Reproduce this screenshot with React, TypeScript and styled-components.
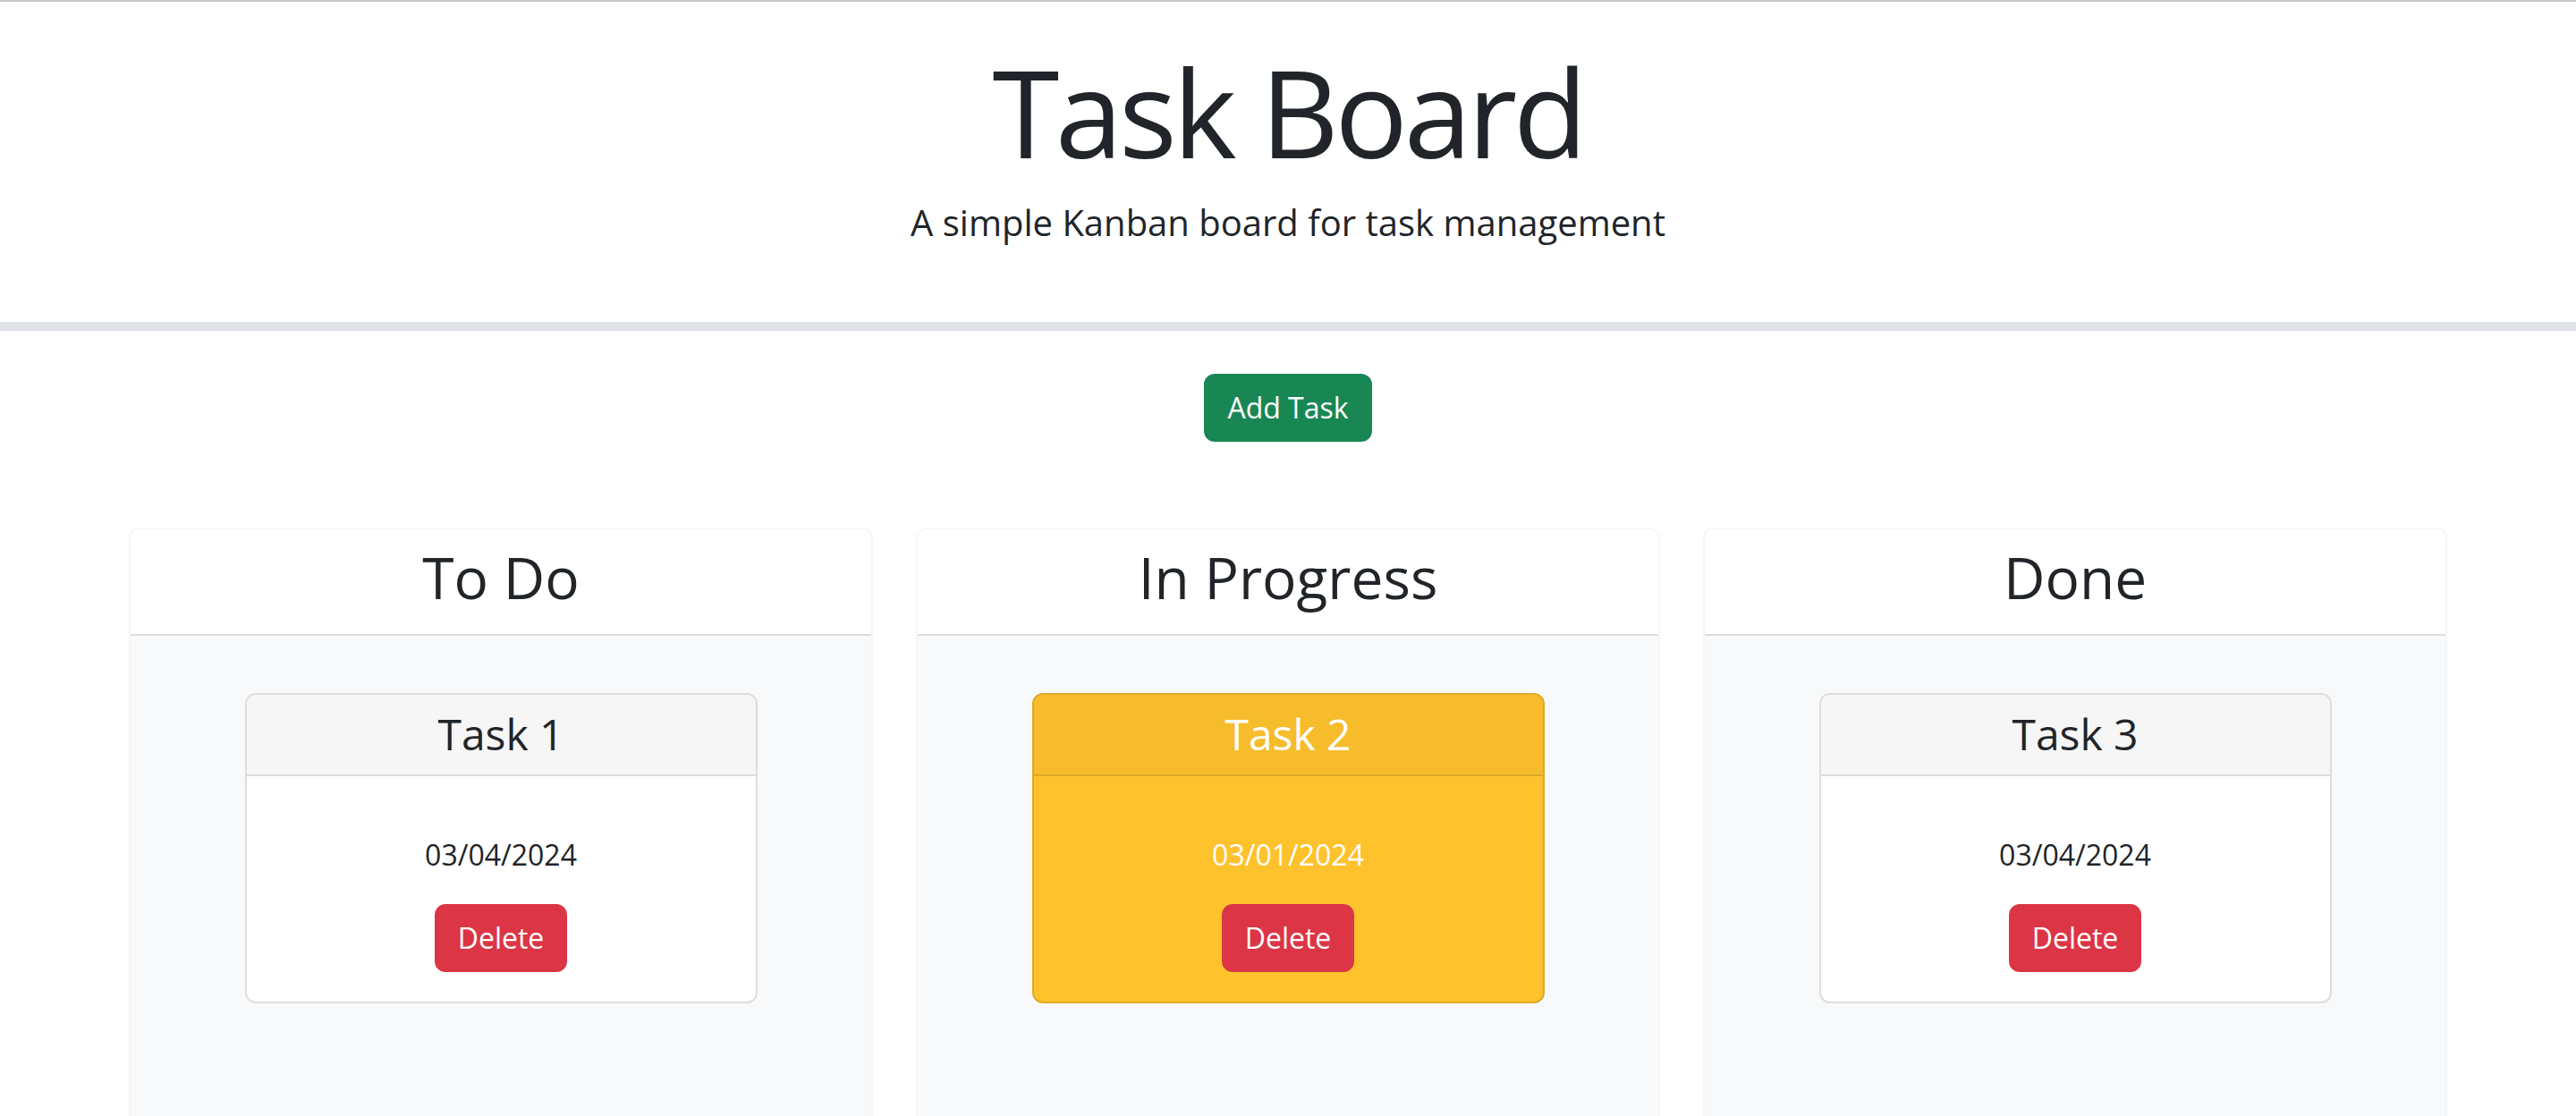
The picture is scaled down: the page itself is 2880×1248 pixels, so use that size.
import React from "react";
import styled, { createGlobalStyle } from "styled-components";

type Task = {
  id: number;
  title: string;
  date: string;
  warning?: boolean;
};

type Lane = {
  id: string;
  title: string;
  tasks: Task[];
};

const lanes: Lane[] = [
  { id: "to-do", title: "To Do", tasks: [{ id: 1, title: "Task 1", date: "03/04/2024" }] },
  {
    id: "in-progress",
    title: "In Progress",
    tasks: [{ id: 2, title: "Task 2", date: "03/01/2024", warning: true }],
  },
  { id: "done", title: "Done", tasks: [{ id: 3, title: "Task 3", date: "03/04/2024" }] },
];

const GlobalStyle = createGlobalStyle`
  * {
    box-sizing: border-box;
  }
  body {
    margin: 0;
    background: #fff;
    color: #212529;
    font-family: "Open Sans", "Noto Sans", sans-serif;
  }
`;

const Header = styled.header`
  border-top: 2px solid #c8c8c8;
  border-bottom: 10px solid #dee2e6;
  padding: 41px 0 49px;
  text-align: center;
`;

const Title = styled.h1`
  margin: 0 0 13px;
  font-size: 136px;
  font-weight: 400;
  letter-spacing: -4.5px;
  line-height: 1.2;
`;

const Lead = styled.p`
  margin: 0 0 32px;
  font-size: 40px;
  font-weight: 400;
  line-height: 1.5;
`;

const Toolbar = styled.div`
  display: flex;
  justify-content: center;
  margin-top: 48px;
`;

const Button = styled.button<{ $variant: "success" | "danger" }>`
  font-family: inherit;
  font-size: 32px;
  line-height: 1.5;
  padding: 12px 24px;
  color: #fff;
  border-radius: 12px;
  border: 2px solid ${({ $variant }) => ($variant === "success" ? "#198754" : "#dc3545")};
  background: ${({ $variant }) => ($variant === "success" ? "#198754" : "#dc3545")};
  cursor: pointer;
`;

const Board = styled.main`
  width: 2640px;
  margin: 96px auto 0;
  padding: 0 24px;
  display: grid;
  grid-template-columns: repeat(3, 1fr);
  gap: 48px;
`;

const LaneCard = styled.section`
  display: flex;
  flex-direction: column;
  border: 2px solid #f5f6f7;
  border-radius: 12px;
  overflow: hidden;
`;

const LaneHeader = styled.div`
  background: #fff;
  padding: 16px 32px;
  border-bottom: 2px solid #dcdcdc;
  text-align: center;
`;

const LaneTitle = styled.h2`
  margin: 0 0 8px;
  font-size: 64px;
  font-weight: 400;
  line-height: 1.2;
`;

const LaneBody = styled.div`
  background: #f8f9fa;
  padding: 64px 32px 32px;
  min-height: 700px;
`;

const TaskCard = styled.div<{ $warning?: boolean }>`
  width: 75%;
  margin: 0 auto;
  border-radius: 12px;
  border: 2px solid ${({ $warning }) => ($warning ? "#ddaa28" : "#dddddd")};
  background: ${({ $warning }) => ($warning ? "#fec22c" : "#fff")};
  color: ${({ $warning }) => ($warning ? "#fff" : "#212529")};
  overflow: hidden;
  text-align: center;
`;

const TaskHeader = styled.div<{ $warning?: boolean }>`
  background: ${({ $warning }) => ($warning ? "#f6bc2b" : "#f6f6f6")};
  border-bottom: 2px solid ${({ $warning }) => ($warning ? "#ddaa28" : "#dddddd")};
  padding: 15px 32px 17px;
  font-size: 48px;
  font-weight: 400;
  line-height: 1.2;
  height: 91px;
`;

const TaskBody = styled.div`
  padding: 64px 32px 33px;
`;

const TaskDate = styled.p`
  margin: 0 0 31px;
  font-size: 32px;
  line-height: 1.5;
`;

export default function App() {
  return (
    <>
      <GlobalStyle />
      <Header>
        <Title>Task Board</Title>
        <Lead>A simple Kanban board for task management</Lead>
      </Header>
      <Toolbar>
        <Button $variant="success">Add Task</Button>
      </Toolbar>
      <Board>
        {lanes.map((lane) => (
          <LaneCard key={lane.id}>
            <LaneHeader>
              <LaneTitle>{lane.title}</LaneTitle>
            </LaneHeader>
            <LaneBody>
              {lane.tasks.map((task) => (
                <TaskCard key={task.id} $warning={task.warning}>
                  <TaskHeader $warning={task.warning}>{task.title}</TaskHeader>
                  <TaskBody>
                    <TaskDate>{task.date}</TaskDate>
                    <Button $variant="danger">Delete</Button>
                  </TaskBody>
                </TaskCard>
              ))}
            </LaneBody>
          </LaneCard>
        ))}
      </Board>
    </>
  );
}
